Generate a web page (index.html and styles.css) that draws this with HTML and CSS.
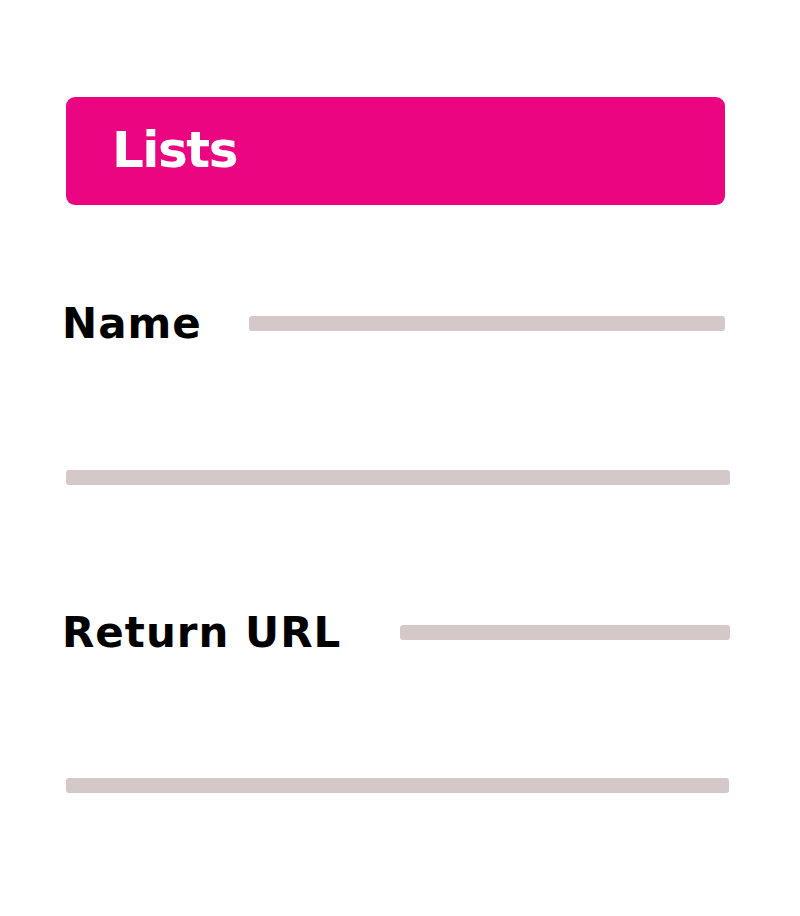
FILE: index.html
```html
<!DOCTYPE html>
<html lang="en">
<head>
<meta charset="utf-8">
<title>Lists</title>
<link rel="stylesheet" href="styles.css">
</head>
<body>
<main class="page">
  <header class="banner"><h1 class="banner-title">Lists</h1></header>
  <div class="field field-name">
    <span class="label">Name</span>
    <span class="bar bar-name"></span>
  </div>
  <div class="bar bar-full"></div>
  <div class="field field-url">
    <span class="label">Return URL</span>
    <span class="bar bar-url"></span>
  </div>
  <div class="bar bar-full bar-last"></div>
</main>
</body>
</html>
```

FILE: styles.css
```css
html, body {
  margin: 0;
  padding: 0;
  background: #ffffff;
}
body {
  font-family: "DejaVu Sans", "Inter", sans-serif;
}
.page {
  width: 664px;
  margin-left: 66px;
  padding-top: 97px;
  display: flex;
  flex-direction: column;
}
.banner {
  height: 108px;
  width: 659px;
  background: #eb0581;
  border-radius: 9px;
  display: flex;
  align-items: center;
  padding-left: 46px;
  box-sizing: border-box;
}
.banner-title {
  margin: 0;
  color: #ffffff;
  font-size: 50px;
  font-weight: 700;
  line-height: 1;
  letter-spacing: -1.5px;
  position: relative;
  top: -1px;
}
.field {
  height: 50px;
  display: flex;
  align-items: center;
  margin-top: 93px;
}
.field-url {
  margin-top: 122px;
}
.label {
  font-size: 42px;
  font-weight: 700;
  color: #000000;
  margin-left: -4px;
  letter-spacing: 1px;
}
.bar {
  display: block;
  height: 15px;
  background: #d5c8c8;
  border-radius: 3px;
}
.bar-name {
  margin-left: auto;
  margin-right: 5px;
  width: 476px;
}
.bar-url {
  margin-left: auto;
  width: 330px;
}
.bar-full {
  margin-top: 122px;
  width: 664px;
}
.bar-last {
  margin-top: 121px;
  width: 663px;
}
```
